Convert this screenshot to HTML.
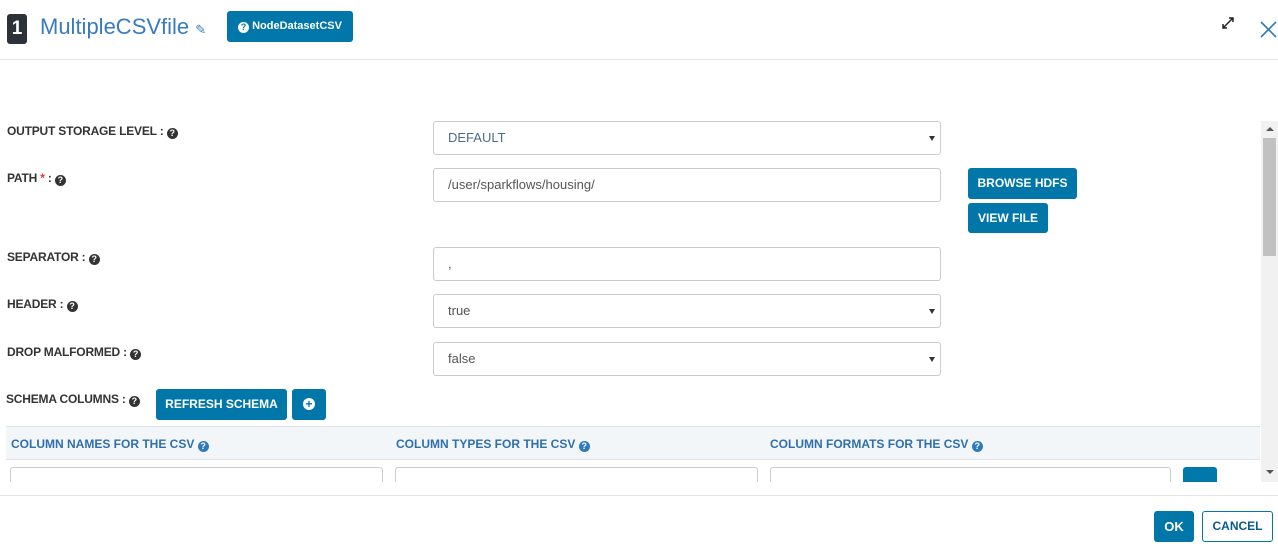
<!DOCTYPE html>
<html><head><style>
*{box-sizing:border-box;margin:0;padding:0}
body{width:1278px;height:547px;overflow:hidden;background:#fff;font-family:"Liberation Sans",sans-serif;position:relative}
.a{position:absolute}
.lbl{font-size:12px;font-weight:bold;color:#333;letter-spacing:-0.2px}
.q{display:inline-block;width:11px;height:11px;border-radius:50%;background:#333;color:#fff;font-size:9px;line-height:11px;text-align:center;font-weight:bold;vertical-align:-1px}
.qb{background:#2f7ab8}
.in{border:1px solid #ccc;border-radius:3px;height:34px;font-size:13px;color:#555;padding:0 14px;line-height:32px;background:#fff}
.sel{color:#4a6c8a}
.sel:after{content:"";position:absolute;right:5px;top:14px;border-left:3px solid transparent;border-right:3px solid transparent;border-top:5px solid #333}
.btn{background:#0077a8;color:#fff;font-size:12px;font-weight:bold;border-radius:3px;text-align:center}
.th{font-size:12px;font-weight:bold;color:#2f6fab}
</style></head><body>
<div class="a" style="left:7px;top:14px;width:20px;height:30px;background:#2d3238;border-radius:3px;color:#fff;font-size:19px;font-weight:bold;text-align:center;line-height:30px">1</div>
<div class="a" style="left:40px;top:14px;font-size:22px;color:#3a7bbf">MultipleCSVfile <span style="font-size:13px">&#9998;</span></div>
<div class="a btn" style="left:227px;top:11px;width:126px;height:31px;line-height:31px;font-size:11px"><span class="q" style="background:#fff;color:#0077a8">?</span> NodeDatasetCSV</div>
<svg class="a" style="left:1222px;top:17px" width="12" height="12" viewBox="0 0 12 12"><path d="M1 11L11 1M7 1h4v4M1 7v4h4" stroke="#222" stroke-width="1.5" fill="none"/></svg>
<svg class="a" style="left:1260px;top:21px" width="17" height="17" viewBox="0 0 17 17"><path d="M1 1L16 16M16 1L1 16" stroke="#2f7ab8" stroke-width="1.6"/></svg>
<div class="a" style="left:0;top:59px;width:1278px;height:1px;background:#e6e6e6"></div>

<div class="a lbl" style="left:7px;top:124px">OUTPUT STORAGE LEVEL : <span class="q">?</span></div>
<div class="a in sel" style="left:433px;top:121px;width:508px">DEFAULT</div>
<div class="a lbl" style="left:7px;top:171px">PATH <span style="color:#e33">*</span> : <span class="q">?</span></div>
<div class="a in" style="left:433px;top:168px;width:508px">/user/sparkflows/housing/</div>
<div class="a btn" style="left:968px;top:168px;width:109px;height:31px;line-height:31px">BROWSE HDFS</div>
<div class="a btn" style="left:968px;top:203px;width:80px;height:30px;line-height:30px">VIEW FILE</div>
<div class="a lbl" style="left:7px;top:250px">SEPARATOR : <span class="q">?</span></div>
<div class="a in" style="left:433px;top:247px;width:508px">,</div>
<div class="a lbl" style="left:7px;top:297px">HEADER : <span class="q">?</span></div>
<div class="a in sel" style="left:433px;top:294px;width:508px;color:#555">true</div>
<div class="a lbl" style="left:7px;top:345px">DROP MALFORMED : <span class="q">?</span></div>
<div class="a in sel" style="left:433px;top:342px;width:508px;color:#555">false</div>
<div class="a lbl" style="left:6px;top:392px">SCHEMA COLUMNS : <span class="q">?</span></div>
<div class="a btn" style="left:156px;top:389px;width:131px;height:31px;line-height:31px">REFRESH SCHEMA</div>
<div class="a btn" style="left:292px;top:389px;width:34px;height:31px;padding-top:9px"><span class="q" style="background:#fff;color:#0077a8;width:12px;height:12px;line-height:12px;font-size:12px;display:block;margin:0 auto">+</span></div>

<div class="a" style="left:6px;top:426px;width:1254px;height:34px;background:#f2f6f9;border-top:1px solid #dde3e8;border-bottom:1px solid #dde3e8"></div>
<div class="a th" style="left:11px;top:437px">COLUMN NAMES FOR THE CSV <span class="q qb">?</span></div>
<div class="a th" style="left:396px;top:437px">COLUMN TYPES FOR THE CSV <span class="q qb">?</span></div>
<div class="a th" style="left:770px;top:437px">COLUMN FORMATS FOR THE CSV <span class="q qb">?</span></div>
<div class="a" style="left:0;top:460px;width:1260px;height:22px;overflow:hidden">
 <div class="a in" style="left:10px;top:7px;width:373px"></div>
 <div class="a in" style="left:395px;top:7px;width:363px"></div>
 <div class="a in" style="left:770px;top:7px;width:401px"></div>
 <div class="a btn" style="left:1183px;top:7px;width:34px;height:30px"></div>
</div>
<div class="a" style="left:1261px;top:121px;width:17px;height:361px;background:#f1f1f1"></div>
<div class="a" style="left:1263px;top:138px;width:13px;height:118px;background:#c1c1c1"></div>
<div class="a" style="left:1266px;top:127px;border-left:4px solid transparent;border-right:4px solid transparent;border-bottom:4px solid #555"></div>
<div class="a" style="left:1266px;top:470px;border-left:4px solid transparent;border-right:4px solid transparent;border-top:4px solid #555"></div>
<div class="a" style="left:0;top:495px;width:1278px;height:1px;background:#e6e6e6"></div>
<div class="a btn" style="left:1154px;top:511px;width:40px;height:31px;line-height:31px;font-size:13px">OK</div>
<div class="a" style="left:1202px;top:511px;width:71px;height:31px;line-height:29px;border:1px solid #0077a8;border-radius:3px;color:#0a5a8a;font-size:12px;font-weight:bold;text-align:center">CANCEL</div>
</body></html>
